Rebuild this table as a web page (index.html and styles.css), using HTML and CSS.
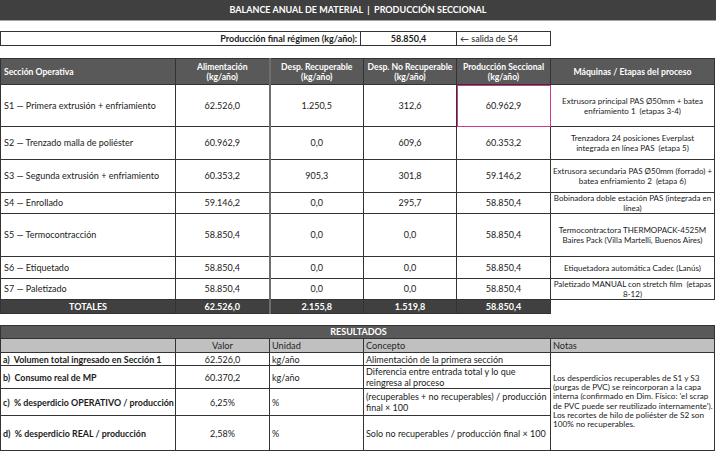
FILE: index.html
```html
<!DOCTYPE html>
<html lang="es">
<head>
<meta charset="utf-8">
<title>Balance anual de material</title>
<link rel="stylesheet" href="styles.css">
</head>
<body>
<div class="title">BALANCE ANUAL DE MATERIAL &nbsp;|&nbsp; PRODUCCIÓN SECCIONAL</div>

<table class="prod">
  <colgroup><col class="p1"><col class="p2"><col class="p3"></colgroup>
  <tr>
    <td class="plabel">Producción final régimen (kg/año):</td>
    <td class="pval">58.850,4</td>
    <td class="pnote">← salida de S4</td>
  </tr>
</table>

<table class="main">
  <colgroup>
    <col class="c1"><col class="c2"><col class="c3"><col class="c4"><col class="c5"><col class="c6">
  </colgroup>
  <tr class="head">
    <th class="left">Sección Operativa</th>
    <th>Alimentación<br>(kg/año)</th>
    <th class="thick">Desp. Recuperable<br>(kg/año)</th>
    <th>Desp. No Recuperable<br>(kg/año)</th>
    <th>Producción Seccional<br>(kg/año)</th>
    <th class="big">Máquinas / Etapas del proceso</th>
  </tr>
  <tr class="r1">
    <td class="sec">S1 — Primera extrusión + enfriamiento</td>
    <td>62.526,0</td><td class="thick">1.250,5</td><td>312,6</td>
    <td class="sel">60.962,9</td>
    <td class="maq">Extrusora principal PAS Ø50mm + batea enfriamiento 1&nbsp; (etapas 3-4)</td>
  </tr>
  <tr class="r2">
    <td class="sec">S2 — Trenzado malla de poliéster</td>
    <td>60.962,9</td><td class="thick">0,0</td><td>609,6</td><td>60.353,2</td>
    <td class="maq">Trenzadora 24 posiciones Everplast<br>integrada en línea PAS&nbsp; (etapa 5)</td>
  </tr>
  <tr class="r3">
    <td class="sec">S3 — Segunda extrusión + enfriamiento</td>
    <td>60.353,2</td><td class="thick">905,3</td><td>301,8</td><td>59.146,2</td>
    <td class="maq">Extrusora secundaria PAS Ø50mm (forrado) + batea enfriamiento 2&nbsp; (etapa 6)</td>
  </tr>
  <tr class="r4">
    <td class="sec">S4 — Enrollado</td>
    <td>59.146,2</td><td class="thick">0,0</td><td>295,7</td><td>58.850,4</td>
    <td class="maq">Bobinadora doble estación PAS (integrada en línea)</td>
  </tr>
  <tr class="r5">
    <td class="sec">S5 — Termocontracción</td>
    <td>58.850,4</td><td class="thick">0,0</td><td>0,0</td><td>58.850,4</td>
    <td class="maq">Termocontractora THERMOPACK-4525M Baires Pack (Villa Martelli, Buenos Aires)</td>
  </tr>
  <tr class="r6">
    <td class="sec">S6 — Etiquetado</td>
    <td>58.850,4</td><td class="thick">0,0</td><td>0,0</td><td>58.850,4</td>
    <td class="maq">Etiquetadora automática Cadec (Lanús)</td>
  </tr>
  <tr class="r7">
    <td class="sec">S7 — Paletizado</td>
    <td>58.850,4</td><td class="thick">0,0</td><td>0,0</td><td>58.850,4</td>
    <td class="maq">Paletizado MANUAL con stretch film&nbsp; (etapas 8-12)</td>
  </tr>
  <tr class="tot">
    <td class="totl">TOTALES</td>
    <td>62.526,0</td><td class="thick">2.155,8</td><td>1.519,8</td><td>58.850,4</td>
    <td class="blank"></td>
  </tr>
</table>

<table class="res">
  <colgroup>
    <col class="c1"><col class="c2"><col class="c3"><col class="rc4"><col class="c6">
  </colgroup>
  <tr class="rhead"><td colspan="5">RESULTADOS</td></tr>
  <tr class="rsub">
    <td></td><td class="ctr">Valor</td><td>Unidad</td><td>Concepto</td><td>Notas</td>
  </tr>
  <tr class="ra">
    <td class="lab">a)&nbsp; Volumen total ingresado en Sección 1</td>
    <td class="ctr">62.526,0</td><td>kg/año</td>
    <td class="con">Alimentación de la primera sección</td>
    <td class="notes" rowspan="4">Los desperdicios recuperables de S1 y S3 (purgas de PVC) se reincorporan a la capa interna (confirmado en Dim. Físico: 'el scrap de PVC puede ser reutilizado internamente'). Los recortes de hilo de poliéster de S2 son 100% no recuperables.</td>
  </tr>
  <tr class="rb">
    <td class="lab">b)&nbsp; Consumo real de MP</td>
    <td class="ctr">60.370,2</td><td>kg/año</td>
    <td class="con">Diferencia entre entrada total y lo que reingresa al proceso</td>
  </tr>
  <tr class="rc">
    <td class="lab">c)&nbsp; % desperdicio OPERATIVO / producción</td>
    <td class="ctr">6,25%</td><td>%</td>
    <td class="con">(recuperables + no recuperables) / producción final × 100</td>
  </tr>
  <tr class="rd">
    <td class="lab">d)&nbsp; % desperdicio REAL / producción</td>
    <td class="ctr">2,58%</td><td>%</td>
    <td class="con">Solo no recuperables / producción final × 100</td>
  </tr>
</table>
</body>
</html>
```

FILE: styles.css
```css
* { box-sizing: border-box; }
html, body { margin: 0; padding: 0; background: #ffffff; }
body {
  width: 716px;
  font-family: "Lato", "Liberation Sans", sans-serif;
  font-size: 9px;
  color: #1a1a1a;
}

.title {
  height: 21px;
  background: #404040;
  border-bottom: 1px solid #a6a6a6;
  color: #ffffff;
  font-weight: 700;
  font-size: 9px;
  text-align: center;
  line-height: 20px;
}

table {
  border-collapse: collapse;
  table-layout: fixed;
}
td, th { padding: 0; overflow: hidden; }

/* production row */
.prod {
  margin-top: 10px;
  width: 550px;
}
.prod .p1 { width: 360px; }
.prod .p2 { width: 96px; }
.prod .p3 { width: 94px; }
.prod td {
  height: 14px;
  border: 1px solid #333333;
  line-height: 12px;
}
.plabel { text-align: right; font-weight: 700; padding-right: 3px !important; }
.pval { text-align: center; font-weight: 700; }
.pnote { padding-left: 3px !important; }

/* main table */
.main {
  margin-top: 12px;
  width: 714px;
}
.c1 { width: 175px; }
.c2 { width: 94px; }
.c3 { width: 94px; }
.c4 { width: 93px; }
.c5 { width: 94px; }
.c6 { width: 164px; }
.rc4 { width: 187px; }

.main td, .main th {
  border: 1px solid #333333;
  text-align: center;
  line-height: 10px;
}
.main .thick { border-left: 2px solid #6e6e6e; }
.head th {
  height: 26px;
  background: #595959;
  color: #ffffff;
  font-weight: 700;
  font-size: 8.6px;
}
.head th.big { font-size: 8.7px; }
.head th.left { text-align: left; padding-left: 3px; }
.main td.sec { text-align: left; padding-left: 3px; }
.main td.maq { font-size: 8px; line-height: 10px; padding: 0 1px; }
.r1 td { height: 42px; }
.r2 td { height: 33px; }
.r3 td { height: 33px; }
.r4 td { height: 20px; }
.r5 td { height: 43px; }
.r6 td { height: 22px; }
.r7 td { height: 20px; }
.main td.sel {
  outline: 1px solid #cf3a8e;
  outline-offset: -1px;
}
.tot td {
  height: 14px;
  background: #404040;
  color: #ffffff;
  font-weight: 700;
  line-height: 12px;
}
.tot td.blank {
  background: #ffffff;
  border: none;
  border-top: 1px solid #333333;
}

/* results */
.res {
  margin-top: 11px;
  width: 714px;
}
.res td {
  border: 1px solid #333333;
  text-align: left;
  padding-left: 2px;
  line-height: 11px;
}
.res td.ctr { text-align: center; padding-left: 0; }
.rhead td {
  height: 13px;
  background: #595959;
  color: #ffffff;
  font-weight: 700;
  text-align: center;
  line-height: 12px;
}
.rsub td {
  height: 14px;
  background: #c0c0c0;
  color: #262626;
  font-size: 9.2px;
}
.res td.lab { font-weight: 700; font-size: 8.9px; padding-left: 2px; white-space: nowrap; }
.res td.con { font-size: 9px; }
.ra td { height: 13px; }
.rb td { height: 23px; }
.rc td { height: 27px; }
.rd td { height: 35px; }
.res td.notes {
  font-size: 8.2px;
  line-height: 9.2px;
  padding: 0 1px 0 2px;
  vertical-align: middle;
}
```
